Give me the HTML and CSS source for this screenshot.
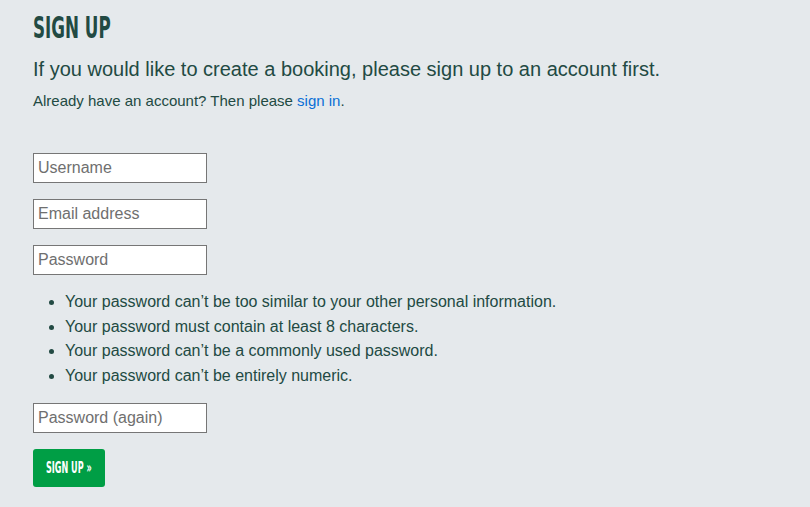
FILE: index.html
```html
<!DOCTYPE html>
<html lang="en">
<head>
<meta charset="utf-8">
<title>Sign up</title>
<link rel="stylesheet" href="styles.css">
</head>
<body>
<main class="page">
  <h1 class="title"><span class="title-text">Sign Up</span></h1>
  <p class="lead">If you would like to create a booking, please sign up to an account first.</p>
  <p class="note">Already have an account? Then please <a class="link" href="#">sign in</a>.</p>
  <form class="form">
    <input class="field" type="text" placeholder="Username">
    <input class="field" type="email" placeholder="Email address">
    <input class="field" type="password" placeholder="Password">
    <ul class="rules">
      <li>Your password can’t be too similar to your other personal information.</li>
      <li>Your password must contain at least 8 characters.</li>
      <li>Your password can’t be a commonly used password.</li>
      <li>Your password can’t be entirely numeric.</li>
    </ul>
    <input class="field" type="password" placeholder="Password (again)">
    <button class="btn" type="submit"><span class="btn-text">Sign Up &raquo;</span></button>
  </form>
</main>
</body>
</html>
```

FILE: styles.css
```css
html, body {
  margin: 0;
  padding: 0;
  background: #e5e9ec;
}
body {
  font-family: "Liberation Sans", Arial, sans-serif;
  color: #224a43;
}
.page {
  padding: 11px 33px 0;
}
.title {
  margin: 0;
  font-family: "Liberation Sans Narrow", "DejaVu Sans Condensed", sans-serif;
  font-weight: bold;
  font-size: 31px;
  line-height: 30px;
  padding-top: 1px;
  height: 29px;
  text-transform: uppercase;
  color: #224a43;
}
.title-text {
  display: inline-block;
  transform: scaleX(0.6);
  transform-origin: left center;
}
.lead {
  margin: 16px 0 0;
  font-size: 20px;
  line-height: 24px;
}
.note {
  margin: 10px 0 0;
  font-size: 15px;
  line-height: 20px;
}
.link {
  color: #0a6fd6;
  text-decoration: none;
}
.form {
  display: flex;
  flex-direction: column;
  align-items: flex-start;
  margin-top: 42px;
}
.field {
  box-sizing: border-box;
  width: 174px;
  height: 30px;
  margin: 0 0 16px;
  padding: 0 4px;
  border: 1px solid #767676;
  border-radius: 0;
  background: #fff;
  font-family: "Liberation Sans", Arial, sans-serif;
  font-size: 16px;
  color: #222;
}
.field::placeholder {
  color: #6f6f6f;
}
.rules {
  margin: -1px 0 14px;
  padding-left: 32px;
  font-size: 16px;
  line-height: 24.7px;
}
.btn {
  box-sizing: border-box;
  width: 72px;
  height: 38px;
  border: none;
  border-radius: 3px;
  background: #009e45;
  color: #fff;
  padding: 0 0 0 13px;
  text-align: left;
  font-family: "Liberation Sans Narrow", "DejaVu Sans Condensed", sans-serif;
  font-weight: bold;
  font-size: 15px;
  text-transform: uppercase;
}
.btn-text {
  display: inline-block;
  transform: scaleX(0.6);
  transform-origin: left center;
  white-space: nowrap;
}
```
